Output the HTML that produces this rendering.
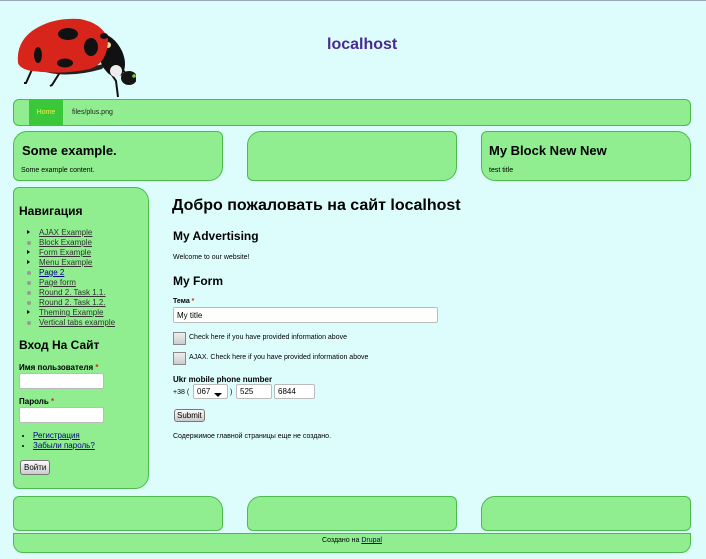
<!DOCTYPE html><html><head><meta charset="utf-8"><style>
body{margin:0;width:706px;height:559px;background:#ddfdfd;font-family:"Liberation Sans",Arial,sans-serif;position:relative;overflow:hidden;border-top:1px solid #9ab;box-sizing:border-box}
.g{position:absolute;background:#90ee90;border:1px solid #4cbb4c;box-sizing:border-box}
a{color:#000080}
.a{position:absolute}
h2{margin:0;font-size:13px}
input.t{position:absolute;height:16px;border:1px solid #bbb;background:#fff;box-sizing:border-box;border-radius:2px;font:8px "Liberation Sans",sans-serif;padding:0 3px}
.cb{position:absolute;width:13px;height:13px;border:1px solid #888;background:linear-gradient(#eee,#ccc);box-sizing:border-box}
.btn{position:absolute;border:1px solid #777;border-radius:3px;background:linear-gradient(#fafafa,#ccc);font-size:8px;padding:2px 3px}
ul{margin:0;padding:0;list-style:none}
.nav li{font-size:8px;height:10px;line-height:10px;position:relative;padding-left:12px}
.nav li:before{content:"";position:absolute;left:0;top:3px;width:4px;height:4px;border-radius:50%;background:#999}
.nav li.c:before{border-radius:0;width:0;height:0;background:none;border-left:3px solid #000;border-top:2.5px solid transparent;border-bottom:2.5px solid transparent;top:2px}
</style></head><body>
<svg class="a" style="left:12px;top:12px" width="124" height="86" viewBox="0 0 124 86">
<path d="M22 52 L14 70 L12 70 M50 56 L40 72 L38 73 M92 50 L104 68 L106 84 M105 50 L115 62" stroke="#111" stroke-width="2" fill="none"/>
<path d="M30 58 Q55 66 90 56 L95 50 Q60 60 28 54Z" fill="#222"/>
<path d="M88 20 Q102 22 110 38 Q116 52 110 62 Q100 66 94 58 Q84 48 88 20Z" fill="#111"/>
<ellipse cx="104" cy="58" rx="6" ry="6" fill="#eee"/>
<circle cx="96" cy="32" r="3" fill="#f4d8a0"/>
<ellipse cx="117" cy="65" rx="8" ry="7" fill="#151515"/>
<circle cx="122" cy="63" r="1.8" fill="#7c3"/>
<path d="M6 50 Q4 30 20 18 Q40 4 68 6 Q90 10 96 26 Q96 50 78 56 Q50 62 20 58 Q8 56 6 50Z" fill="#d8251c"/>
<ellipse cx="56" cy="21" rx="10" ry="6" fill="#111"/><ellipse cx="79" cy="34" rx="7" ry="9" fill="#111"/><ellipse cx="53" cy="50" rx="8" ry="4.5" fill="#111"/><ellipse cx="26" cy="42" rx="4" ry="8" fill="#111"/><ellipse cx="92" cy="23" rx="4" ry="3" fill="#111"/>
</svg>
<div class="a" style="left:327px;top:35px;font-size:16px;font-weight:bold;color:#4b2a91">localhost</div>
<div class="g" style="left:13px;top:98px;width:678px;height:27px;border-radius:6px"></div>
<div class="a" style="left:29px;top:99px;width:34px;height:25px;background:#3ac83a;color:#ee4;font-size:7px;line-height:25px;text-align:center">Home</div>
<div class="a" style="left:72px;top:99px;font-size:7px;line-height:25px;color:#222">files/plus.png</div>
<div class="g" style="left:13px;top:130px;width:210px;height:50px;border-radius:14px 6px 14px 6px"></div>
<div class="g" style="left:247px;top:130px;width:210px;height:50px;border-radius:14px 6px 14px 6px"></div>
<div class="g" style="left:481px;top:130px;width:210px;height:50px;border-radius:6px 14px 6px 14px"></div>
<h2 class="a" style="left:22px;top:142px">Some example.</h2>
<div class="a" style="left:21px;top:166px;font-size:7px">Some example content.</div>
<h2 class="a" style="left:489px;top:142px">My Block New New</h2>
<div class="a" style="left:489px;top:166px;font-size:7px">test title</div>
<div class="g" style="left:13px;top:186px;width:136px;height:302px;border-radius:6px 14px 14px 6px"></div>
<h2 class="a" style="left:19px;top:203px;font-size:12px">Навигация</h2>
<ul class="a nav" style="left:27px;top:227px">
<li class="c"><a href="#" style="color:#333">AJAX Example</a></li><li><a href="#" style="color:#333">Block Example</a></li><li class="c"><a href="#" style="color:#333">Form Example</a></li><li class="c"><a href="#" style="color:#333">Menu Example</a></li><li><a href="#">Page 2</a></li><li><a href="#" style="color:#333">Page form</a></li><li><a href="#" style="color:#333">Round 2. Task 1.1.</a></li><li><a href="#" style="color:#333">Round 2. Task 1.2.</a></li><li class="c"><a href="#" style="color:#333">Theming Example</a></li><li><a href="#" style="color:#333">Vertical tabs example</a></li></ul>
<h2 class="a" style="left:19px;top:337px;font-size:12px">Вход На Сайт</h2>
<div class="a" style="left:19px;top:362px;font-size:8px;font-weight:bold">Имя пользователя <span style="color:#c30">*</span></div>
<input class="t" style="left:19px;top:372px;width:85px">
<div class="a" style="left:19px;top:396px;font-size:8px;font-weight:bold">Пароль <span style="color:#c30">*</span></div>
<input class="t" style="left:19px;top:406px;width:85px">
<ul class="a" style="left:33px;top:430px;font-size:8px;line-height:10px;list-style:disc"><li><a href="#">Регистрация</a></li><li><a href="#">Забыли пароль?</a></li></ul>
<div class="btn" style="left:20px;top:459px">Войти</div>
<div class="a" style="left:172px;top:196px;font-size:16px;font-weight:bold">Добро пожаловать на сайт localhost</div>
<h2 class="a" style="left:173px;top:228px;font-size:12px">My Advertising</h2>
<div class="a" style="left:173px;top:253px;font-size:7px">Welcome to our website!</div>
<h2 class="a" style="left:173px;top:273px;font-size:12px">My Form</h2>
<div class="a" style="left:173px;top:297px;font-size:7px;font-weight:bold">Тема <span style="color:#c30">*</span></div>
<input class="t" style="left:173px;top:306px;width:265px" value="My title">
<div class="cb" style="left:173px;top:331px"></div><div class="a" style="left:189px;top:333px;font-size:7px">Check here if you have provided information above</div>
<div class="cb" style="left:173px;top:351px"></div><div class="a" style="left:189px;top:353px;font-size:7px">AJAX. Check here if you have provided information above</div>
<div class="a" style="left:173px;top:374px;font-size:8px;font-weight:bold">Ukr mobile phone number</div>
<div class="a" style="left:173px;top:388px;font-size:7px">+38 (</div>
<input class="t" style="left:193px;top:383px;width:35px;height:15px" value="067">
<div class="a" style="left:214px;top:392px;border-left:4px solid transparent;border-right:4px solid transparent;border-top:4px solid #000"></div>
<div class="a" style="left:230px;top:388px;font-size:7px">)</div>
<input class="t" style="left:236px;top:383px;width:36px;height:15px" value="525">
<input class="t" style="left:274px;top:383px;width:41px;height:15px" value="6844">
<div class="btn" style="left:174px;top:408px;font-size:8px;padding:1px 2px">Submit</div>
<div class="a" style="left:173px;top:432px;font-size:7px">Содержимое главной страницы еще не создано.</div>
<div class="g" style="left:13px;top:495px;width:210px;height:35px;border-radius:6px 14px 6px 6px"></div>
<div class="g" style="left:247px;top:495px;width:210px;height:35px;border-radius:14px 6px 6px 6px"></div>
<div class="g" style="left:481px;top:495px;width:210px;height:35px;border-radius:14px 6px 6px 6px"></div>
<div class="g" style="left:13px;top:532px;width:678px;height:20px;border-radius:0 0 10px 10px;font-size:7px;text-align:center;line-height:14px">Создано на <a href="#">Drupal</a></div>
</body></html>
